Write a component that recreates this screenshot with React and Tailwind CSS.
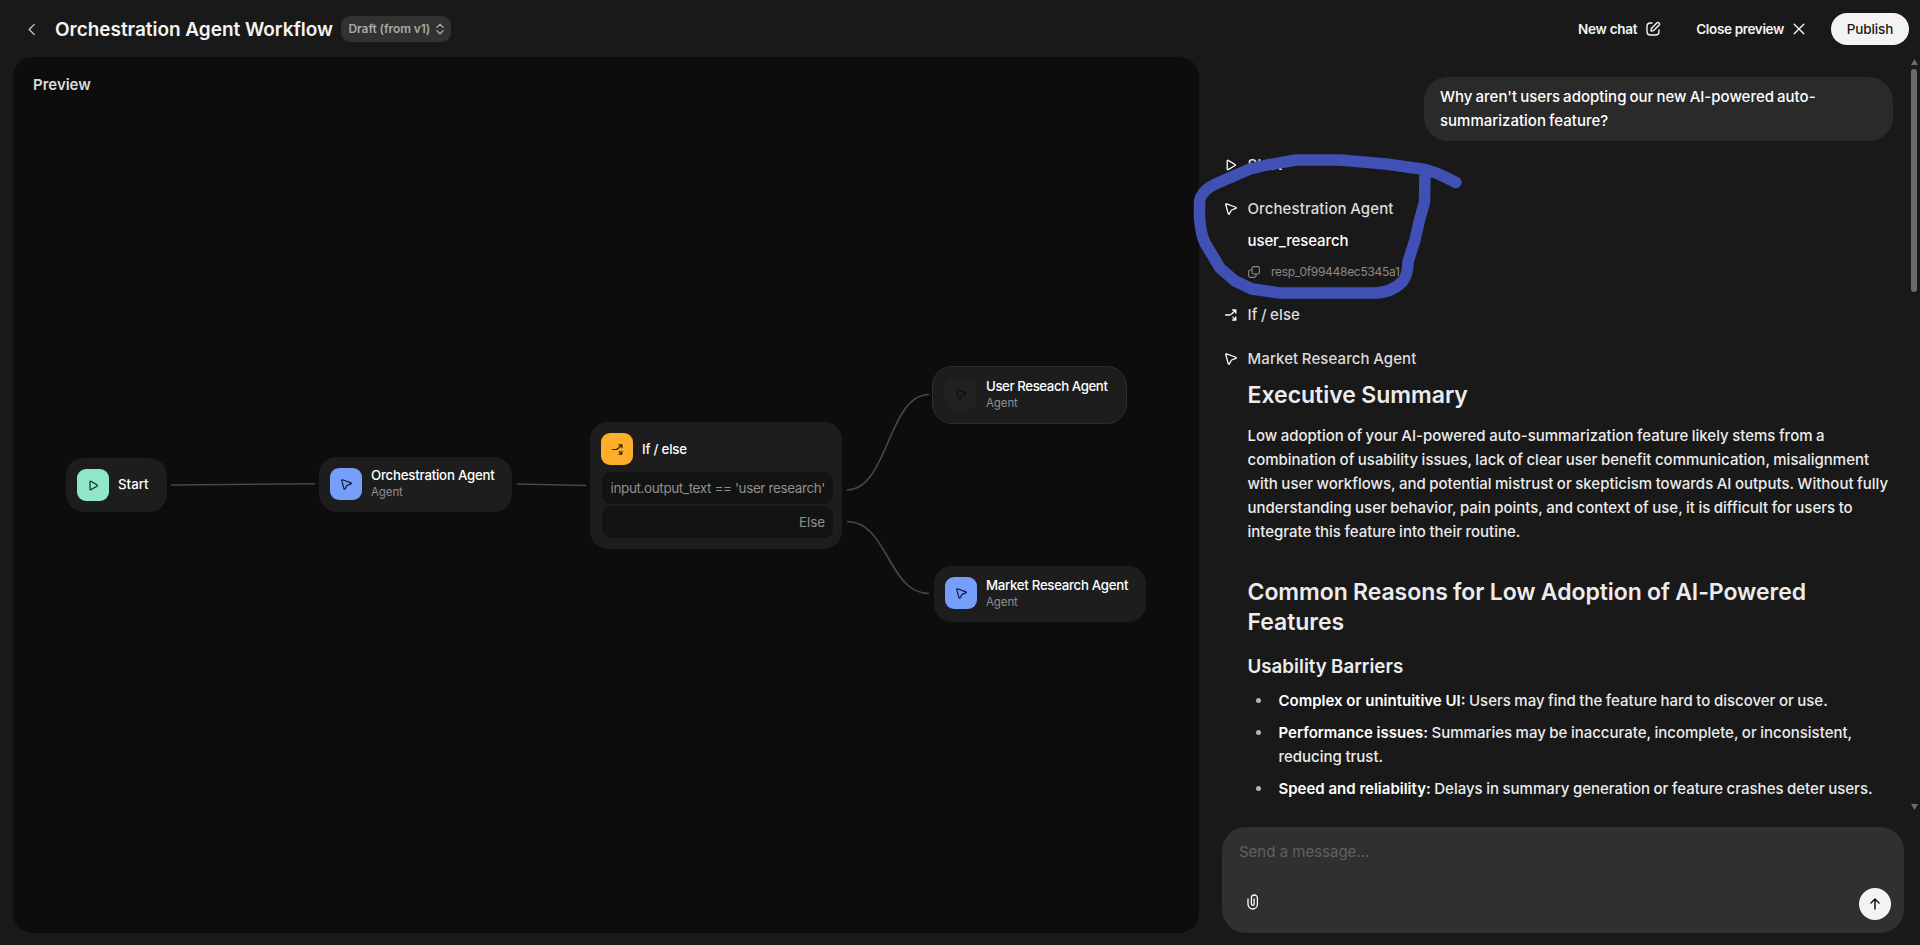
import React from "react";

function PlayIcon({ className }) {
  return (
    <svg viewBox="0 0 12 12" className={className} fill="none" stroke="currentColor" strokeWidth="1.3" strokeLinejoin="round">
      <path d="M2.2 1.9v8.2c0 .5.5.8.9.5l7-4.1c.4-.2.4-.8 0-1L3.1 1.4c-.4-.3-.9 0-.9.5Z" />
    </svg>
  );
}

function AgentIcon({ className }) {
  return (
    <svg viewBox="0 0 12 12" className={className} fill="none" stroke="currentColor" strokeWidth="1.3" strokeLinejoin="round">
      <path d="M.75 1.5 3.3 10.8c.15.5.85.55 1.05.1L6.2 7.5c.1-.25.3-.4.5-.5l4.2-1.7c.5-.2.5-.85.05-1.05L1.5.8C1.05.6.6 1.05.75 1.5Z" />
    </svg>
  );
}

function BranchIcon({ className }) {
  return (
    <svg viewBox="0 0 12 12" className={className} fill="none" stroke="currentColor" strokeWidth="1.3" strokeLinejoin="round" strokeLinecap="round">
      <path d="M.6 6h3.6c1 0 1.7-.4 2.4-1.1L10.3 1.5M7.6 1h3.2v3.2M7.9 8.1l2.5 2.5M7.6 11h3.2V7.8" />
    </svg>
  );
}

function FlowNode({ className, icon, iconClass, title, titleClass = "", subtitle }) {
  return (
    <div className={`absolute flex items-start gap-[9px] bg-[#1d1d1d] pt-[11px] ${className}`}>
      <div className={`flex size-8 shrink-0 items-center justify-center rounded-[9px] ${iconClass}`}>{icon}</div>
      <div className={`flex flex-col ${subtitle ? "" : "h-8 justify-center"}`}>
        <span className={`text-[13.25px] leading-4 font-medium whitespace-nowrap text-white ${titleClass}`}>{title}</span>
        {subtitle && <span className="mt-px text-[11.5px] leading-4 tracking-[-0.1px] whitespace-nowrap text-[#8f8f8f]">{subtitle}</span>}
      </div>
    </div>
  );
}

function StepRow({ icon, label, className = "" }) {
  return (
    <div className={`flex h-6 items-center gap-[10.5px] ${className}`}>
      <div className="flex w-3 justify-center text-white">{icon}</div>
      <span className="text-[15px] font-medium tracking-[0.1px] whitespace-nowrap text-[#dcdcdc] [word-spacing:-0.6px]">{label}</span>
    </div>
  );
}

function Bullet({ term, children }) {
  return (
    <li className="flex">
      <span className="mt-[9px] mr-[18px] ml-2 size-[5px] shrink-0 rounded-full bg-[#b4b4b4]" />
      <span>
        <strong className="font-semibold text-white [word-spacing:0px]">{term}</strong> {children}
      </span>
    </li>
  );
}

export default function App() {
  return (
    <div className="flex h-[945px] w-[1920px] flex-col overflow-hidden bg-[#191919] font-['Inter',sans-serif] text-white">
      <header className="flex h-[57px] shrink-0 items-center pt-px pr-[11px] pl-[27px]">
        <svg viewBox="0 0 8 14" className="h-[13px] w-[9px]" fill="none" stroke="#c9c9c9" strokeWidth="1.4" strokeLinecap="round" strokeLinejoin="round">
          <path d="M7 1.5 1.5 7 7 12.500" />
        </svg>
        <h1 className="ml-[19px] w-[277px] pt-[2px] text-[19px] font-semibold tracking-[-0.03px] whitespace-nowrap text-[#f3f3f3]">Orchestration Agent Workflow</h1>
        <button className="ml-[9px] flex h-[26px] w-[110px] items-center rounded-[9px] bg-[#323232] pl-[7.5px] text-[12px] font-semibold tracking-[-0.1px] text-[#a8a8a8]">
          <span className="whitespace-nowrap">Draft (from v1)</span>
          <svg viewBox="0 0 8 12" className="ml-[6px] h-3 w-2" fill="none" stroke="currentColor" strokeWidth="1.3" strokeLinecap="round" strokeLinejoin="round">
            <path d="M1 4.2 4 1.2l3 3M1 7.800l3 3 3-3" />
          </svg>
        </button>
        <div className="ml-auto flex items-center text-[13.5px] font-semibold text-[#f3f3f3]">
          <span className="tracking-[-0.27px]">New chat</span>
          <svg viewBox="0 0 16 16" className="ml-2 size-4" fill="none" stroke="currentColor" strokeWidth="1.4" strokeLinecap="round" strokeLinejoin="round">
            <path d="M7 2H5.5C3 2 2 3 2 5.5v5C2 13 3 14 5.5 14h5c2.5 0 3.5-1 3.5-3.5V9" />
            <path d="M6 10l.4-2.600L12 1.800c.5-.5 1.300-.5 1.800 0l.4.4c.5.5.5 1.300 0 1.800L8.600 9.600 6 10Z" />
          </svg>
          <span className="ml-[35px] tracking-[-0.35px]">Close preview</span>
          <svg viewBox="0 0 12 12" className="ml-[9px] size-3" fill="none" stroke="currentColor" strokeWidth="1.4" strokeLinecap="round">
            <path d="M1.2 1.2l9.600 9.600M10.800 1.200 1.200 10.800" />
          </svg>
          <button className="ml-[26px] h-8 w-[78px] rounded-full bg-[#f3f3f3] font-medium tracking-[-0.1px] text-[#1a1a1a]">Publish</button>
        </div>
      </header>

      <div className="flex min-h-0 flex-1">
        <main className="relative ml-[13px] h-[876px] w-[1186px] shrink-0 overflow-hidden rounded-[20px] bg-[#0d0d0d]">
          <h2 className="pt-[17px] pl-5 text-[15px] leading-[22px] font-semibold text-[#dcdcdc]">Preview</h2>
          <svg viewBox="13 57 1186 876" className="absolute inset-0 h-[876px] w-[1186px]" fill="none" stroke="#484848" strokeWidth="1.6">
            <path d="M171 485 315 483.800" />
            <path d="M517 484 586 485.500" />
            <path d="M847 490C888 490 888 394.500 929 394.500" />
            <path d="M847 521.500C888 521.500 888 593.500 929 593.500" />
          </svg>
          <FlowNode className="top-[401px] left-[53px] h-[54px] w-[101px] rounded-[18px] pl-[11px]" title="Start" titleClass="-mt-[2px]" iconClass="bg-[#8fe6cb] text-[#12261f]" icon={<PlayIcon className="size-[11px]" />} />
          <FlowNode className="top-[400px] left-[306px] h-[55px] w-[193px] rounded-[18px] pl-[11px]" title="Orchestration Agent" titleClass="-mt-px tracking-[-0.22px]" subtitle="Agent" iconClass="bg-[#769ffb] text-[#0f1d3d]" icon={<AgentIcon className="size-[11px]" />} />
          <div className="absolute top-[365px] left-[577px] flex h-[127px] w-[252px] flex-col rounded-[18px] bg-[#1d1d1d] pt-[11px] pr-[9px] pl-[12px]">
            <div className="-ml-px flex items-center gap-[9px]">
              <div className="flex size-8 items-center justify-center rounded-[9px] bg-[#ffae2b] text-[#33210a]"><BranchIcon className="size-[11px]" /></div>
              <span className="text-[13.25px] leading-4 font-medium tracking-[-0.2px]">If / else</span>
            </div>
            <div className="mt-[7px] flex flex-col gap-[2px] text-right text-[13.5px] leading-[33px] tracking-[-0.39px] whitespace-nowrap text-[#8f8f8f]">
              <div className="h-8 rounded-[9px] bg-[#131313] pr-2">input.output_text == 'user research'</div>
              <div className="h-8 rounded-[9px] bg-[#131313] pr-2 tracking-[-0.1px]">Else</div>
            </div>
          </div>
          <FlowNode className="top-[309px] left-[919px] h-[58px] w-[195px] rounded-[20px] border border-[#2e2e2e] pl-[12px]" title="User Reseach Agent" titleClass="tracking-[-0.42px]" subtitle="Agent" iconClass="bg-[#212121] text-[#0d0d0d]" icon={<AgentIcon className="size-[11px]" />} />
          <FlowNode className="top-[509px] left-[921px] h-[56px] w-[212px] rounded-[18px] pl-[11px]" title="Market Research Agent" titleClass="tracking-[-0.3px]" subtitle="Agent" iconClass="bg-[#769ffb] text-[#0f1d3d]" icon={<AgentIcon className="size-[11px]" />} />
        </main>

        <aside className="relative flex flex-1 flex-col">
          <div className="flex h-[755px] shrink-0">
            <div className="flex h-full w-[712px] flex-col overflow-hidden pt-5 pl-[26px] text-[15px] leading-6 font-medium text-[#ececec]">
              <div className="ml-[199px] flex h-16 w-[469px] shrink-0 items-center rounded-[24px] bg-[#2a2a2a] pl-4 text-white">
                <p className="whitespace-nowrap [word-spacing:-0.9px]">Why aren't users adopting our new AI-powered auto-<br />summarization feature?</p>
              </div>
              <StepRow className="mt-3" icon={<PlayIcon className="size-3" />} label="Start" />
              <StepRow className="mt-5" icon={<AgentIcon className="size-3" />} label="Orchestration Agent" />
              <p className="mt-2 ml-[22.5px] tracking-[-0.1px] text-white">user_research</p>
              <div className="mt-[9px] ml-[23px] flex h-5 items-center gap-[11px] text-[12px] font-normal tracking-[-0.3px] text-[#8a8a8a]">
                <svg viewBox="0 0 12 12" className="size-3" fill="none" stroke="currentColor" strokeWidth="1.1" strokeLinejoin="round">
                  <rect x="4" y=".6" width="7.4" height="7.4" rx="1.8" />
                  <path d="M4 4H2.400C1.300 4 .6 4.700.6 5.800v3.800c0 1.100.7 1.800 1.800 1.800h3.800C7.300 11.400 8 10.700 8 9.600V8" />
                </svg>
                <span>resp_0f99448ec5345a1</span>
              </div>
              <StepRow className="mt-[21px]" icon={<BranchIcon className="size-3" />} label="If / else" />
              <StepRow className="mt-5" icon={<AgentIcon className="size-3" />} label="Market Research Agent" />
              <article className="ml-[22.5px] whitespace-nowrap [word-spacing:-0.5px]">
                <h2 className="mt-[9px] text-[23px] leading-[30px] font-semibold">Executive Summary</h2>
                <p className="mt-[14px]">
                  Low adoption of your AI-powered auto-summarization feature likely stems from a<br />
                  combination of usability issues, lack of clear user benefit communication, misalignment<br />
                  with user workflows, and potential mistrust or skepticism towards AI outputs. Without fully<br />
                  understanding user behavior, pain points, and context of use, it is difficult for users to<br />
                  integrate this feature into their routine.
                </p>
                <h2 className="mt-[33px] text-[23px] leading-[30px] font-semibold tracking-[-0.04px]">Common Reasons for Low Adoption of AI-Powered<br />Features</h2>
                <h3 className="mt-4 text-[18.75px] leading-7 font-semibold">Usability Barriers</h3>
                <ul className="mt-2 flex flex-col gap-2">
                  <Bullet term="Complex or unintuitive UI:">Users may find the feature hard to discover or use.</Bullet>
                  <Bullet term="Performance issues:">Summaries may be inaccurate, incomplete, or inconsistent,<br />reducing trust.</Bullet>
                  <Bullet term="Speed and reliability:">Delays in summary generation or feature crashes deter users.</Bullet>
                </ul>
              </article>
            </div>
            <div className="flex w-[6px] flex-col items-center pt-[2px]">
              <svg viewBox="0 0 6 5" className="h-[6px] w-[7px] shrink-0" fill="#6b6b6b"><path d="M3 0 6 5H0Z" /></svg>
              <div className="mt-1 h-[223px] w-[6px] rounded-full bg-[#6b6b6b]" />
              <svg viewBox="0 0 6 5" className="mt-auto mb-[2px] h-[6px] w-[7px] shrink-0" fill="#6b6b6b"><path d="M0 0h6L3 5Z" /></svg>
            </div>
          </div>
          <div className="mt-[15px] ml-[23px] flex h-[106px] w-[682px] flex-col justify-between rounded-[24px] bg-[#303030] pt-[13px] pr-[13px] pb-[13px] pl-[17px]">
            <span className="text-[15px] leading-6 text-[#606060]">Send a message...</span>
            <div className="flex items-center justify-between pl-[8px]">
              <svg viewBox="0 0 12 16" className="mb-1 h-4 w-3" fill="none" stroke="white" strokeWidth="1.3" strokeLinecap="round">
                <path d="M1 5v5.300a4.700 4.700 0 0 0 9.400 0V4a3 3 0 0 0-6 0v6a1.300 1.300 0 0 0 2.700 0V5" />
              </svg>
              <button className="flex size-8 items-center justify-center rounded-full bg-[#f3f3f3]">
                <svg viewBox="0 0 12 12" className="size-3" fill="none" stroke="#111" strokeWidth="1.5" strokeLinecap="round" strokeLinejoin="round">
                  <path d="M6 11V1.200M2 5l4-4 4 4" />
                </svg>
              </button>
            </div>
          </div>
          <svg viewBox="1190 150 280 155" className="absolute top-[93px] left-[-9px] h-[155px] w-[280px]" fill="none" stroke="#4150b5" strokeWidth="11.5" strokeLinecap="round" strokeLinejoin="round">
            <path d="M1456 182.500 1446 177.500 1436 173 1425 169.500 1386 164 1340 160H1296L1267 165 1250 169 1220 182Q1200 190 1199.500 203V218Q1201 235 1205 243L1220 268 1235 281 1252 289 1280 293H1373Q1392 293 1403 281 1408 274 1408 262L1415 240 1419 222 1424.500 202 1425 171" />
          </svg>
        </aside>
      </div>
    </div>
  );
}
